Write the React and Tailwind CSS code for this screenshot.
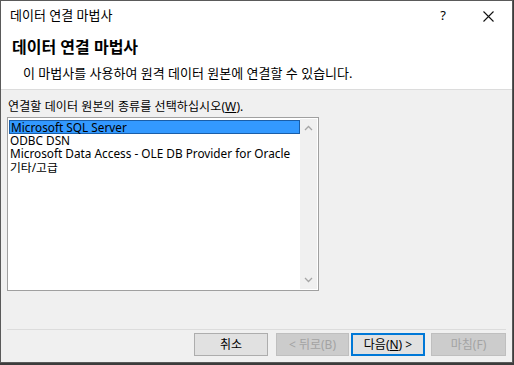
import React, { useState } from 'react';

const font = { fontFamily: '"Noto Sans", "Noto Sans CJK KR", sans-serif' };

const sources = [
  'Microsoft SQL Server',
  'ODBC DSN',
  'Microsoft Data Access - OLE DB Provider for Oracle',
  '기타/고급',
];

function Chevron({ down }) {
  return (
    <svg width="9" height="6" viewBox="0 0 9 6" className="text-[#a6a6a6]">
      <path
        d={down ? 'M1 1 L4.5 4.5 L8 1' : 'M1 5 L4.5 1.5 L8 5'}
        fill="none"
        stroke="currentColor"
        strokeWidth="1.3"
      />
    </svg>
  );
}

function Button({ children, primary, disabled, className = '' }) {
  return (
    <button
      className={
        'h-[23px] text-[12px] leading-none flex items-center justify-center ' +
        className +
        ' ' +
        (primary
          ? 'bg-[#e1e1e1] border-2 border-[#0078d7] text-black'
          : disabled
          ? 'bg-[#cccccc] border border-[#bfbfbf] text-[#a3a3a3]'
          : 'bg-[#e1e1e1] border border-[#adadad] text-black')
      }
    >
      {children}
    </button>
  );
}

export default function App() {
  const [selected, setSelected] = useState(0);

  return (
    <div style={font} className="w-[514px] h-[365px] bg-[#3c3c3c] text-black">
      <div className="w-[513px] h-[363px] border border-[#5a5a5a] flex flex-col bg-[#f0f0f0]">
        {/* title bar */}
        <div className="h-[30px] bg-white flex items-center pl-[9px] text-[13px]">
          <span className="flex-1">데이터 연결 마법사</span>
          <span className="w-[14px] text-center text-[13px]">?</span>
          <svg width="11" height="11" viewBox="0 0 11 11" className="ml-[33px] mr-[18px]">
            <path d="M0.5 0.5 L10.5 10.5 M10.5 0.5 L0.5 10.5" stroke="#111" strokeWidth="1.1" />
          </svg>
        </div>

        {/* header */}
        <div className="h-[59px] bg-white border-b border-[#dcdcdc] pl-[11px] pt-[6px]">
          <div className="text-[16px] font-bold leading-[21px]">데이터 연결 마법사</div>
          <div className="text-[13px] leading-[17px] mt-[7px] pl-[11px]">
            이 마법사를 사용하여 원격 데이터 원본에 연결할 수 있습니다.
          </div>
        </div>

        {/* body */}
        <div className="flex-1 flex flex-col px-[6px] pt-[9px]">
          <div className="text-[12px] leading-[16px] pl-[1px] tracking-[0.1px]">
            연결할 데이터 원본의 종류를 선택하십시오(<span className="underline">W</span>).
          </div>
          <div className="mt-[2px] w-[312px] h-[174px] border border-[#a0a0a0] bg-white flex p-[1px]">
            <div className="flex-1 flex flex-col pt-[1px]">
              {sources.map((s, i) => (
                <div
                  key={s}
                  onClick={() => setSelected(i)}
                  className={
                    'h-[13.5px] text-[11.8px] leading-[13px] pl-[1px] whitespace-nowrap ' +
                    (selected === i ? 'bg-[#3399ff] border border-[#1a5ea8] pl-[0px] leading-[11px]' : '')
                  }
                >
                  {s}
                </div>
              ))}
            </div>
            <div className="w-[17px] bg-[#f0f0f0] flex flex-col items-center justify-between py-[6px]">
              <Chevron />
              <Chevron down />
            </div>
          </div>

          <div className="flex-1" />
          <div className="border-t border-[#dcdcdc] h-[1px]" />
          <div className="flex justify-end items-center pt-[3px] pb-[6px]">
            <Button className="w-[74px]">취소</Button>
            <Button disabled className="ml-[8px] w-[73px]">&lt; 뒤로(B)</Button>
            <Button primary className="ml-[2px] w-[74px]">
              다음(<span className="underline">N</span>) &gt;
            </Button>
            <Button disabled className="ml-[6px] w-[75px]">마침(F)</Button>
          </div>
        </div>
      </div>
    </div>
  );
}
